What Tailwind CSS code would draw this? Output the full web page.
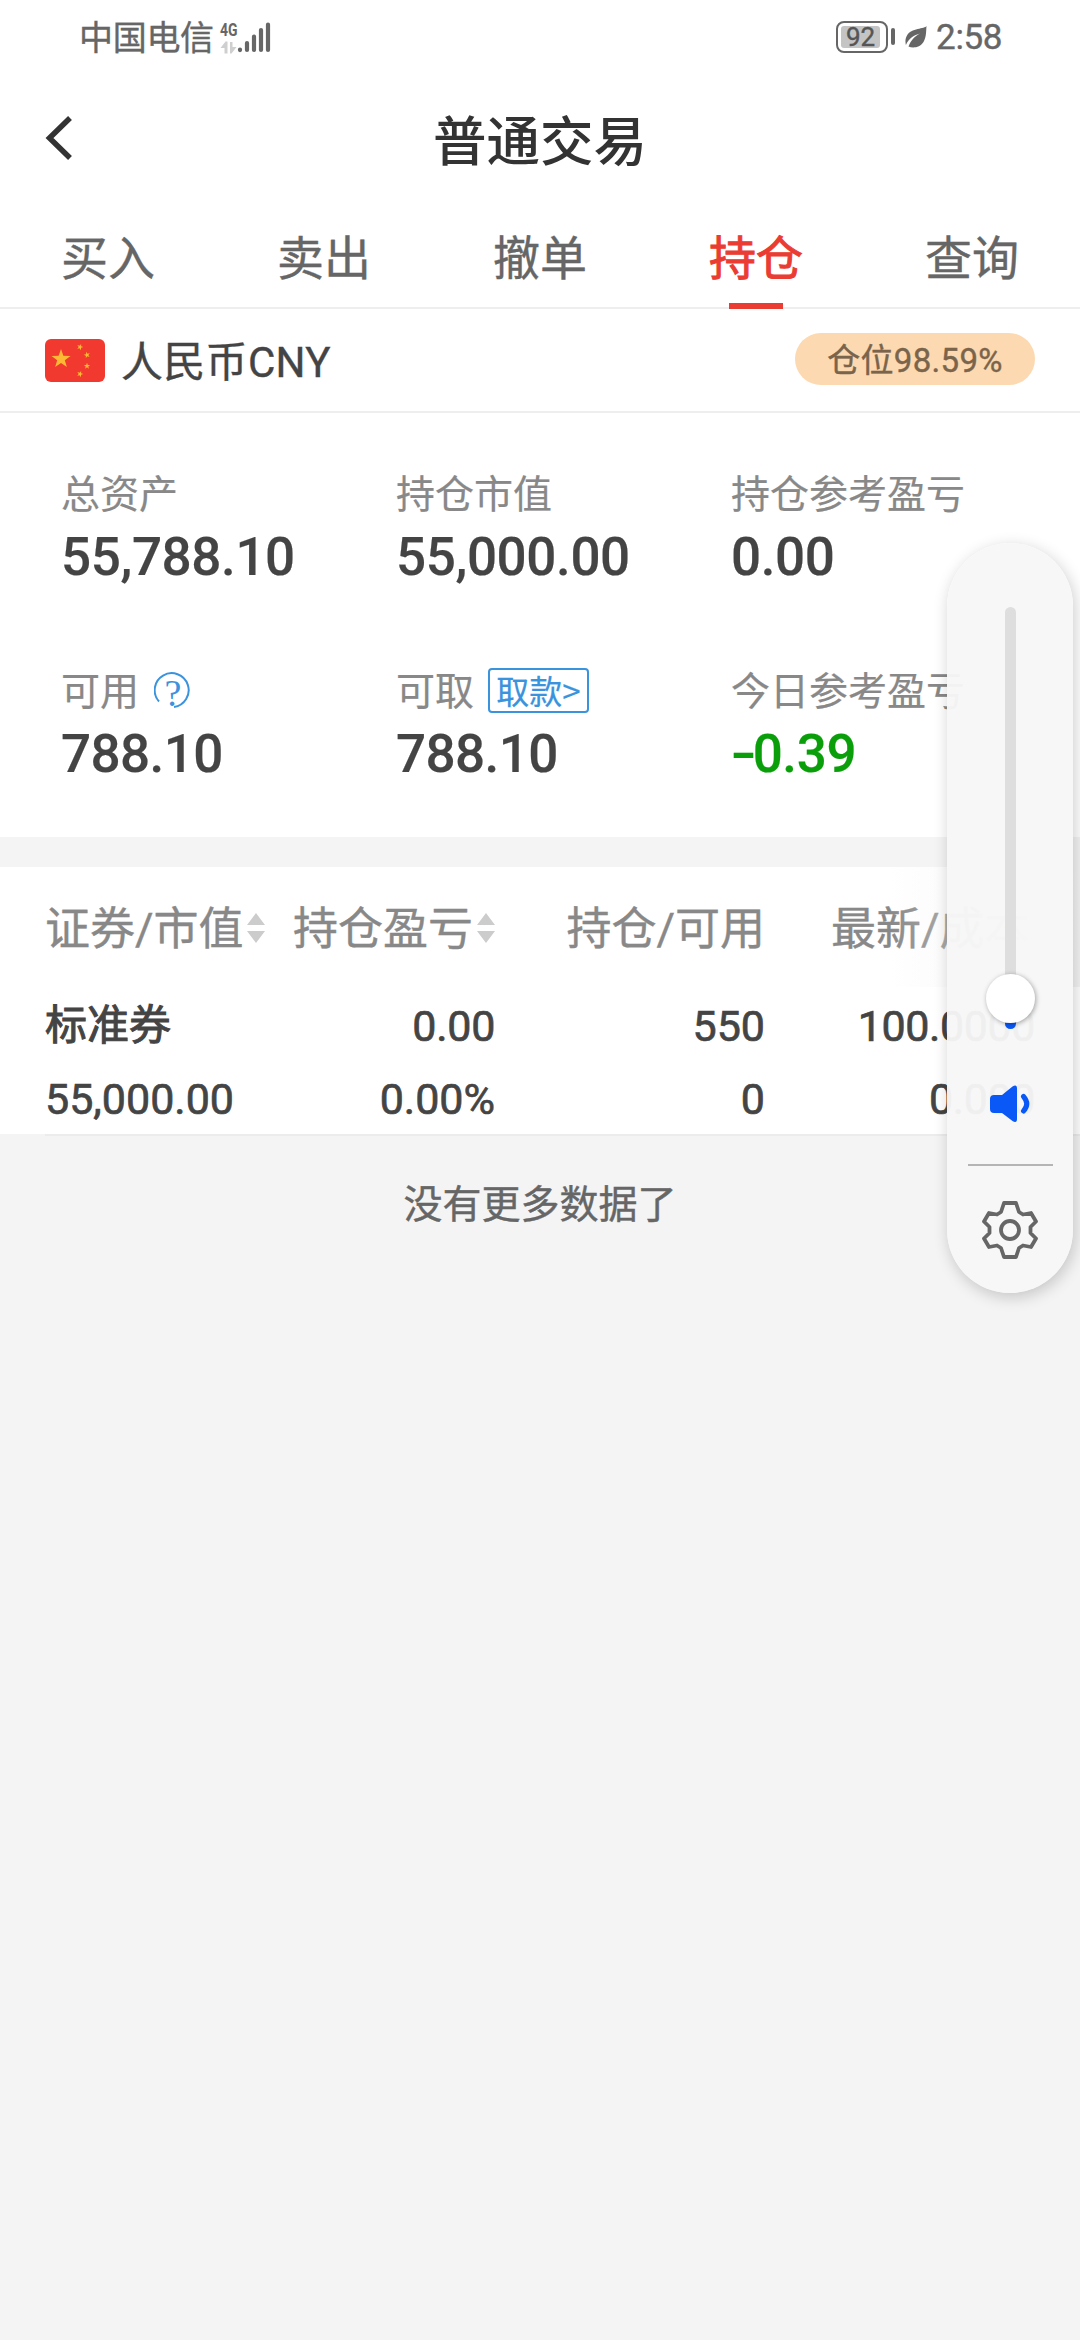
<!DOCTYPE html>
<html lang="zh-CN">
<head>
  <meta charset="UTF-8" />
  <title>普通交易</title>
  <script src="https://cdn.jsdelivr.net/npm/@tailwindcss/browser@4"></script>
</head>
<body class="w-[1080px] h-[2340px] overflow-hidden relative bg-[#f4f4f4] text-[#444444] font-['Roboto','Noto_Sans_CJK_SC',sans-serif] [-webkit-text-stroke:0.4px]">

  <!-- status bar -->
  <div class="h-[75px] bg-white flex items-center pl-[79px] pr-[78px] text-[#666666] leading-none">
    <span class="text-[34px] leading-[50px] tracking-[-0.3px]">中国电信</span>
    <svg class="ml-[5px] overflow-visible" width="52" height="34" viewBox="218 20 52 34">
      <text x="219" y="34.500" font-size="18.500" font-weight="700" textLength="17.500" lengthAdjust="spacingAndGlyphs" fill="#666666">4G</text>
      <g fill="#cfcfcf">
        <path d="M219.500 47l5-6.500h2v12h-3v-5.500zM229 41h2.500v5h4l-5 6.500h-1.500z" />
      </g>
      <g stroke="#666666" stroke-width="4.200" stroke-linecap="round">
        <path d="M239 48.500v.6M246 42v7M253 35.500v13.500M260 29v20M267 23.500v25.500" />
      </g>
    </svg>
    <div class="ml-auto flex items-center">
      <div class="mt-[-2px] w-[52px] h-[32px] border-[2.500px] border-[#666666] rounded-[8px] p-[3px]">
        <div class="h-full w-[39px] bg-[#c4c4c4] rounded-[3px] flex items-center justify-center text-[26px] text-[#555555]">92</div>
      </div>
      <div class="mt-[-2px] w-[4px] h-[17px] ml-[3px] bg-[#666666] rounded-full"></div>
      <svg class="ml-[10px] mt-[-1px]" width="22" height="22" viewBox="0 0 22 22">
        <path d="M21.500 0C20 3 6 2 2 9.500C0 13 .3 16 .9 19C4 12 9 9 15 7.500C10 10 6 14 3.500 20.500C8 22.500 15 21.500 18.500 16C21.500 11 21 5 21.500 0z" fill="#666666" />
      </svg>
      <span class="text-[35px] ml-[9px] tracking-[-0.4px]">2:58</span>
    </div>
  </div>

  <!-- title -->
  <header class="h-[130px] bg-white flex items-center pl-[45px] relative">
    <svg class="mt-[-4px]" width="28" height="44" viewBox="0 0 28 44" fill="none" stroke="#333333" stroke-width="5.500">
      <path d="M25 2L4.500 22L25 42" />
    </svg>
    <h1 class="absolute inset-x-0 top-[38px] text-center text-[53.500px] leading-[60px] font-medium text-[#333333] [-webkit-text-stroke:0]">普通交易</h1>
  </header>

  <!-- tabs -->
  <nav class="h-[104px] bg-white border-b-2 border-[#eeeeee] grid grid-cols-5 text-center text-[47px] leading-[108px] text-[#666666]">
    <div>买入</div>
    <div>卖出</div>
    <div>撤单</div>
    <div class="relative text-[#ea3c32] [-webkit-text-stroke:1px]">持仓
      <span class="absolute left-[81px] top-[98px] w-[54px] h-[6px] bg-[#ea3c32]"></span>
    </div>
    <div>查询</div>
  </nav>

  <!-- currency -->
  <div class="h-[104px] bg-white border-b-2 border-[#eeeeee] flex items-center px-[45px]">
    <svg width="60" height="43" viewBox="0 0 60 43">
      <defs>
        <path id="star" d="M0-10L2.350-3.240L9.510-3.090L3.800 1.240L5.880 8.090L0 4L-5.880 8.090L-3.800 1.240L-9.510-3.090L-2.350-3.240z" fill="#fdb933" />
      </defs>
      <rect width="60" height="43" rx="6" fill="#f1392f" />
      <use href="#star" transform="translate(16 20)" />
      <use href="#star" transform="translate(35 8) rotate(20) scale(.33)" />
      <use href="#star" transform="translate(42 16) rotate(-15) scale(.33)" />
      <use href="#star" transform="translate(42 27) scale(.33)" />
      <use href="#star" transform="translate(35 35) rotate(20) scale(.33)" />
    </svg>
    <span class="ml-[16px] mt-[5px] text-[42px] leading-[60px] tracking-[0.3px]">人民币CNY</span>
    <span class="ml-auto mt-[-3px] w-[240px] h-[52px] rounded-[26px] bg-[#fcd9b1] text-center text-[33px] leading-[55px] tracking-[0.3px] text-[#7a644b]">仓位98.59%</span>
  </div>

  <!-- assets -->
  <section class="h-[424px] bg-white pl-[61px] pt-[54px] grid grid-cols-[335px_335px_1fr] auto-rows-[197px] [-webkit-text-stroke:0.2px]">
    <div>
      <div class="h-[57px] flex items-center text-[39px] text-[#888888]">总资产</div>
      <div class="text-[53px] leading-[66px] tracking-[-0.4px] font-medium">55,788.10</div>
    </div>
    <div>
      <div class="h-[57px] flex items-center text-[39px] text-[#888888]">持仓市值</div>
      <div class="text-[53px] leading-[66px] tracking-[-0.4px] font-medium">55,000.00</div>
    </div>
    <div>
      <div class="h-[57px] flex items-center text-[39px] text-[#888888]">持仓参考盈亏</div>
      <div class="text-[53px] leading-[66px] tracking-[-0.4px] font-medium">0.00</div>
    </div>
    <div>
      <div class="h-[57px] flex items-center text-[39px] text-[#888888]">可用
        <svg class="ml-[15px] mt-[-5px]" width="38" height="38" viewBox="0 0 38 38">
          <path d="M5 30.500A17 17 0 1 1 20 36" fill="none" stroke="#3a93dd" stroke-width="2" />
          <text x="19" y="35" text-anchor="middle" font-size="38" font-family="Liberation Serif" fill="#3a93dd">?</text>
        </svg>
      </div>
      <div class="text-[53px] leading-[66px] tracking-[-0.6px] font-medium">788.10</div>
    </div>
    <div>
      <div class="h-[57px] flex items-center text-[39px] text-[#888888]">可取
        <span class="ml-[14px] mt-[-5px] w-[101px] h-[45px] border-2 border-[#3a93dd] rounded-[4px] text-[33px] leading-[40px] text-center text-[#3a93dd] font-['Noto_Sans_CJK_SC',sans-serif]">取款&gt;</span>
      </div>
      <div class="text-[53px] leading-[66px] tracking-[-0.6px] font-medium">788.10</div>
    </div>
    <div>
      <div class="h-[57px] flex items-center text-[39px] text-[#888888]">今日参考盈亏</div>
      <div class="text-[53px] leading-[66px] tracking-[-0.4px] font-medium text-[#0a9f0a]"><span class="inline-block origin-left scale-x-140 mr-[4px]">-</span>0.39</div>
    </div>
  </section>

  <!-- positions -->
  <section class="mt-[30px] h-[267px] bg-white">
    <div class="h-[120px] pl-[45px] pt-[5px] flex items-center text-[45px] text-[#888888] relative whitespace-nowrap">
      <div class="w-[450px] flex items-center justify-between">
        <span class="flex items-center">证券/市值
          <svg class="ml-[3px] mt-[-3px]" width="18" height="30" viewBox="0 0 18 30" fill="#cccccc"><path d="M0 12L9 0L18 12zM0 18L9 30L18 18z" /></svg>
        </span>
        <span class="flex items-center">持仓盈亏
          <svg class="ml-[4px] mt-[-3px]" width="18" height="30" viewBox="0 0 18 30" fill="#cccccc"><path d="M0 12L9 0L18 12zM0 18L9 30L18 18z" /></svg>
        </span>
      </div>
      <span class="w-[270px] text-right">持仓/可用</span>
      <span class="ml-[66px]">最新/成本</span>
      <div class="absolute right-0 top-0 w-[190px] h-[120px] bg-gradient-to-r from-[#f8f8f8]/0 to-[#f4f4f4]"></div>
    </div>
    <div class="pl-[45px] text-[43px] grid grid-cols-[220px_230px_270px_270px] auto-rows-[73px] leading-[78px] text-right [-webkit-text-stroke:0.7px]">
      <div class="text-left text-[42px] [-webkit-text-stroke:1px]">标准券</div>
      <div class="tracking-[-0.3px]">0.00</div>
      <div>550</div>
      <div class="tracking-[-0.4px]">100.0000</div>
      <div class="text-left">55,000.00</div>
      <div>0.00%</div>
      <div>0</div>
      <div class="tracking-[-0.4px]">0.000</div>
    </div>
  </section>
  <div class="ml-[45px] h-[2px] bg-[#ececec]"></div>
  <p class="mt-[40px] text-center text-[39px] leading-[58px] text-[#666666]">没有更多数据了</p>

  <!-- volume panel -->
  <aside class="absolute left-[947px] top-[543px] w-[126px] h-[750px] rounded-[63px] bg-[#f7f7f7]/96 shadow-[2px_4px_16px_rgba(0,0,0,0.2)] flex flex-col items-center">
    <div class="relative mt-[64px] w-[11px] h-[422px] rounded-full bg-[#dedede] shrink-0">
      <div class="absolute bottom-0 w-[11px] h-[28px] rounded-b-full bg-[#0a59f7]"></div>
      <div class="absolute left-[-19px] top-[367px] size-[49px] rounded-full bg-white shadow-[1px_1px_5px_rgba(0,0,0,0.35)]"></div>
    </div>
    <svg class="mt-[56px] shrink-0" width="42" height="38" viewBox="0 0 42 38">
      <path d="M5 10h8L23.500 1.500Q28 -1 28 3.500V34Q28 38.500 23.500 36L13 28H5Q1 28 1 24V14Q1 10 5 10z" fill="#0a59f7" />
      <path d="M34.500 11.500Q41 19 34.500 26" fill="none" stroke="#0a59f7" stroke-width="5" stroke-linecap="round" />
    </svg>
    <div class="mt-[41px] w-[85px] h-[1.500px] bg-[#b5b5b5] shrink-0"></div>
    <svg class="mt-[35px] shrink-0" width="56" height="58" viewBox="0 0 56 58" fill="none" stroke="#666666" stroke-width="3.800" stroke-linejoin="round">
      <path d="M22 2H34L37 11L41 13.500L49 12L54 20.500L48.500 26V32L54 37.500L49 46L41 44.500L37 47L34 56H22L19 47L15 44.500L7 46L2 37.500L7.500 32V26L2 20.500L7 12L15 13.500L19 11z" />
      <circle cx="28" cy="29" r="9" />
    </svg>
  </aside>
</body>
</html>
